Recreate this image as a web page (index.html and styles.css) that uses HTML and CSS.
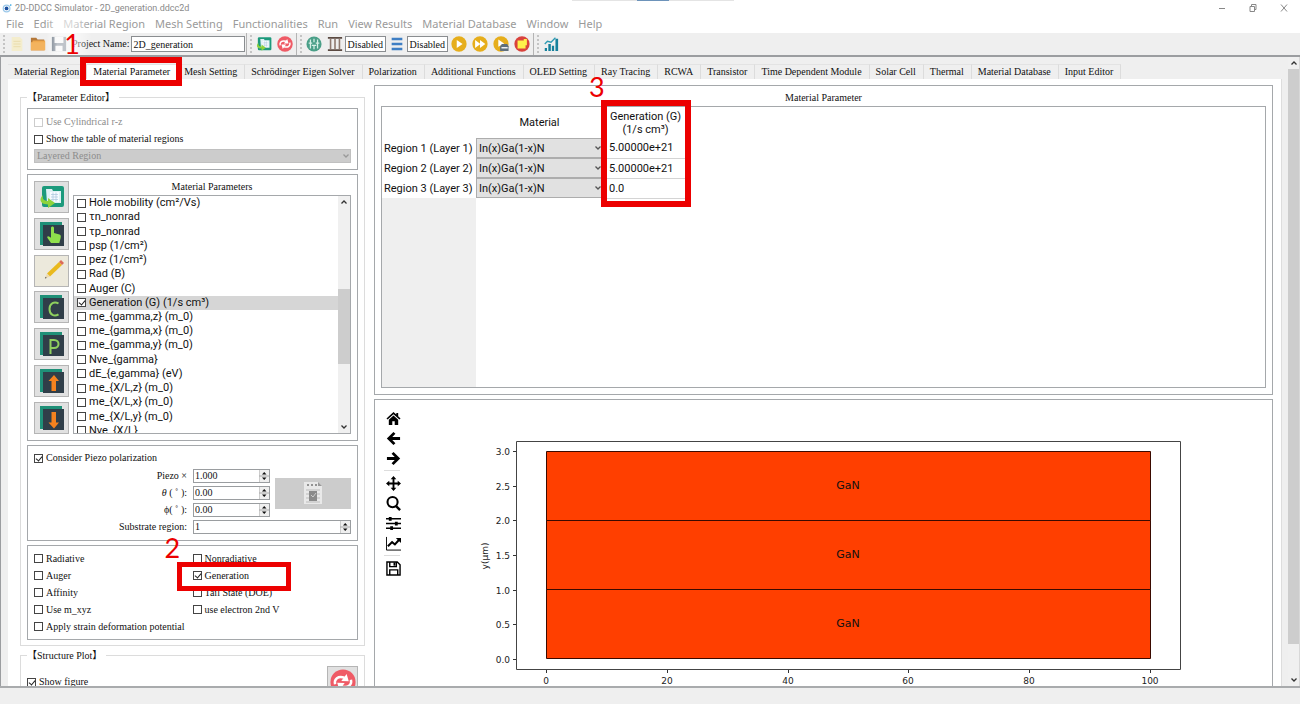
FILE: index.html
```html
<!DOCTYPE html>
<html lang="en">
<head>
<meta charset="utf-8">
<title>2D-DDCC Simulator - 2D_generation.ddcc2d</title>
<link rel="stylesheet" href="styles.css">
</head>
<body>
<svg class="defs" aria-hidden="true">
  <symbol id="chev-up" viewBox="0 0 8 8"><path d="M1.5 5.5 4 3l2.500 2.500" fill="none" stroke="#333" stroke-width="1.300"/></symbol>
  <symbol id="chev-down" viewBox="0 0 8 8"><path d="M1.500 2.500 4 5l2.500-2.500" fill="none" stroke="currentColor" stroke-width="1.300"/></symbol>
  <symbol id="spin" viewBox="0 0 10 12"><path d="M0 0h10v12H0z" fill="#efefef"/><path d="M0 0v12M0 6h10" stroke="#aaa" fill="none"/><path d="M3 4.500 5.200 2l2.300 2.500zM3 7.500 5.200 10l2.300-2.500z" fill="#111"/></symbol>
  <symbol id="refresh" viewBox="0 0 18 18"><circle cx="9" cy="9" r="8.700" fill="#ef5b66"/><path d="M3.500 10.500c-.8-3.500 2-6 6.500-4.500M14.500 7.500c.8 3.500-2 6-6.500 4.500" fill="none" stroke="#fff" stroke-width="1.700"/><path d="M7.800 8.300 13 8.500l-1.500-5zM10.200 9.700 5 9.500l1.500 5z" fill="#fff"/></symbol>
  <symbol id="layers" viewBox="0 0 26 26"><path d="M1 1h22v23H1z" fill="#1f9078"/><path d="M4 4h21v21H4z" fill="#303e49"/></symbol>
  <symbol id="sheet" viewBox="0 0 26 26"><rect x="3" y="2" width="22" height="21" rx="2" fill="#1d9a7c"/><path d="M7 5h6l1 2h8v12H8z" fill="#dff1f5"/><path d="M11 8h9v10h-9z" fill="#f6fbff"/><path d="M12 10.500h7M12 13h7M12 15.500h7M14 8.500v9M17 8.500v9" stroke="#a9c6dd" stroke-width=".7"/><path d="M4 11c-5 5-2 9.500 5 9.500V24l7-5-7-5v3c-4 0-6-2-5-6z" fill="#8ed33c"/></symbol>
</svg>

<header class="titlebar">
  <svg class="logo" viewBox="0 0 12 12"><circle cx="5.500" cy="6.500" r="4" fill="none" stroke="#9cc9ea" stroke-width="1.500"/><circle cx="5.500" cy="6.500" r="2.300" fill="#1b4f9f"/><circle cx="10.500" cy="2.500" r="1" fill="#2fa3e0"/></svg>
  <span class="title">2D-DDCC Simulator - 2D_generation.ddcc2d</span>
  <button class="win" aria-label="Minimize"><svg viewBox="0 0 8 8"><path d="M1 4.500h6"/></svg></button>
  <button class="win" aria-label="Restore"><svg viewBox="0 0 8 8"><path d="M1 2.500h4.500v5H1zM2.500 2.500v-2H7v5H5.500"/></svg></button>
  <button class="win" aria-label="Close"><svg viewBox="0 0 8 8"><path d="m1 .5 6 7M7 .5l-6 7"/></svg></button>
  <span class="snap"></span>
</header>

<nav class="menubar">
  <a href="#">File</a><a href="#">Edit</a><a href="#">Material Region</a><a href="#">Mesh Setting</a><a href="#">Functionalities</a><a href="#">Run</a><a href="#">View Results</a><a href="#">Material Database</a><a href="#">Window</a><a href="#">Help</a>
  <span class="glow"></span>
</nav>

<div class="toolbar">
  <span class="grip"></span>
  <button class="tool dim" aria-label="New"><svg viewBox="0 0 18 18"><path d="M3 1h9l3 3v13H3z" fill="#f7edbf"/><path d="M5 6h8M5 9h8M5 12h8" stroke="#e6d38d"/></svg></button>
  <button class="tool" aria-label="Open"><svg viewBox="0 0 18 18"><path d="M1 2h6l1.500 2H16v12H1z" fill="#b5793a"/><path d="M3 5h14v11H1z" fill="#f0a94d"/><path d="M1 7h16v9H1z" fill="#f3b35e"/></svg></button>
  <button class="tool" aria-label="Save"><svg viewBox="0 0 18 18"><path d="M1 1h16v16H1z" fill="#5f6b7a"/><path d="M4 1h10v7H4zM5 11h8v6H5z" fill="#f4f4f4"/></svg></button>
  <label class="project" for="project">Project Name:</label>
  <input class="field project-name" id="project" type="text" value="2D_generation">
  <span class="sep"></span><span class="grip"></span>
  <button class="tool" aria-label="Import"><svg viewBox="0 0 26 26"><use href="#sheet"/></svg></button>
  <button class="tool" aria-label="Reload"><svg viewBox="0 0 18 18"><use href="#refresh"/></svg></button>
  <span class="sep"></span><span class="grip"></span>
  <button class="tool" aria-label="Mesh"><svg viewBox="0 0 18 18"><circle cx="9" cy="9" r="8.500" fill="#4a9f88"/><path d="M5 4v10M9 3v4M9 11v4M13 4v10M3 8h4M11 8h4M6.500 10.500h5" stroke="#d6efe6" stroke-width="1.400"/></svg></button>
  <button class="tool" aria-label="Columns"><svg viewBox="0 0 18 18"><path d="M1 2h16M1 16h16" stroke="#5b4a42" stroke-width="2"/><path d="M4 3v12M9 3v12M14 3v12" stroke="#8f7a70" stroke-width="1.800"/></svg></button>
  <input class="field state" type="text" value="Disabled" aria-label="Column state">
  <button class="tool" aria-label="Rows"><svg viewBox="0 0 18 18"><path d="M3 3.500h12M3 9h12M3 14.500h12" stroke="#3f7fc4" stroke-width="2.800"/></svg></button>
  <input class="field state" type="text" value="Disabled" aria-label="Row state">
  <button class="tool" aria-label="Run"><svg viewBox="0 0 18 18"><circle cx="9" cy="9" r="8.600" fill="#e6ae1c"/><path d="m6.500 4.500 6.500 4.500-6.500 4.500z" fill="#fff"/></svg></button>
  <button class="tool" aria-label="Run all"><svg viewBox="0 0 18 18"><circle cx="9" cy="9" r="8.600" fill="#e6ae1c"/><path d="m3.500 4.500 6 4.500-6 4.500zM9 4.500l6 4.500-6 4.500z" fill="#fff"/></svg></button>
  <button class="tool" aria-label="Run and save"><svg viewBox="0 0 18 18"><circle cx="9" cy="9" r="8.600" fill="#e6ae1c"/><path d="m6 4 6.500 4.500L6 12z" fill="#fff"/><path d="M8 11.500 10 9h6l1.500 2.500v5.500H8z" fill="#5f6f7c"/><path d="M9.500 12.500h7v1.500h-7z" fill="#fff"/></svg></button>
  <button class="tool" aria-label="Stop"><svg viewBox="0 0 18 18"><circle cx="9" cy="9" r="8.600" fill="#d9423c"/><path d="M4 5h7V3.500h3.500v7H13V14H4z" fill="#fff04a"/></svg></button>
  <span class="sep"></span><span class="grip"></span>
  <button class="tool" aria-label="Plot"><svg viewBox="0 0 18 18"><path d="M2 13.500h2.500V17H2zM6 9h2.800v8H6zM10 11h2.500v6H10zM14 3h3v14h-3z" fill="#16819c"/><path d="m2 9 3-3 4 1 5-5" fill="none" stroke="#2c9ab3" stroke-width="1.500"/></svg></button>
</div>

<main class="workspace">
  <div class="content">
    <div class="tabs" role="tablist">
      <button role="tab">Material Region</button><span class="tab-wrap"><button role="tab" class="active" aria-selected="true">Material Parameter</button><span class="mark mark-tab"><b>1</b></span></span><button role="tab">Mesh Setting</button><button role="tab">Schrödinger Eigen Solver</button><button role="tab">Polarization</button><button role="tab">Additional Functions</button><button role="tab">OLED Setting</button><button role="tab">Ray Tracing</button><button role="tab">RCWA</button><button role="tab">Transistor</button><button role="tab">Time Dependent Module</button><button role="tab">Solar Cell</button><button role="tab">Thermal</button><button role="tab">Material Database</button><button role="tab">Input Editor</button>
    </div>
    <div class="pane">
      <div class="side">
        <fieldset class="group">
          <legend>【Parameter Editor】</legend>
          <section class="panel options">
            <label class="check off"><input type="checkbox" disabled>Use Cylindrical r-z</label>
            <label class="check"><input type="checkbox">Show the table of material regions</label>
            <div class="combo off"><select disabled aria-label="Region type"><option>Layered Region</option></select><svg><use href="#chev-down"/></svg></div>
          </section>
          <section class="panel params">
            <div class="actions">
              <button aria-label="Load table"><svg viewBox="0 0 26 26"><use href="#sheet"/></svg></button>
              <button aria-label="Pick"><svg viewBox="0 0 26 26"><use href="#layers"/><path d="M12 7c0-2 3-2 3 0v5l5.500 1.500c1.500.5 1.500 2 1 4l-1.200 4.500H12l-3.500-5c-1-1.800.8-2.500 2-1.200l1.500 1z" fill="#8fe04c"/></svg></button>
              <button class="cream" aria-label="Edit"><svg viewBox="0 0 26 26"><path d="M8 15.500 20 4l3 3L11 18.500z" fill="#e9b91e"/><path d="m20 4 2-2 3 3-2 2z" fill="#db6b59"/><path d="m8 15.500-2 5 5-2z" fill="#ecd9ae"/><path d="m6.700 18.800-.8 1.800 1.800-.7z" fill="#444"/></svg></button>
              <button aria-label="C"><svg viewBox="0 0 26 26"><use href="#layers"/><path d="M19.500 9.500c-4-2.500-9-.5-9 5.500s5 8 9 5.300" fill="none" stroke="#8fd05e" stroke-width="2"/></svg></button>
              <button aria-label="P"><svg viewBox="0 0 26 26"><use href="#layers"/><path d="M11.500 23V9h3.500c6 0 6 8 0 8h-3.500" fill="none" stroke="#8fd05e" stroke-width="2"/></svg></button>
              <button aria-label="Move up"><svg viewBox="0 0 26 26"><use href="#layers"/><path d="m15 7 5 6h-3v10h-4.500V13h-3z" fill="#f5821f"/></svg></button>
              <button aria-label="Move down"><svg viewBox="0 0 26 26"><use href="#layers"/><path d="m15 23.500 5-6h-3V7h-4.500v10.500h-3z" fill="#f5821f"/></svg></button>
            </div>
            <div class="param-main">
              <h2>Material Parameters</h2>
              <div class="listbox">
                <ul>
                  <li><label class="check"><input type="checkbox">Hole mobility (cm²/Vs)</label></li>
                  <li><label class="check"><input type="checkbox">τn_nonrad</label></li>
                  <li><label class="check"><input type="checkbox">τp_nonrad</label></li>
                  <li><label class="check"><input type="checkbox">psp (1/cm²)</label></li>
                  <li><label class="check"><input type="checkbox">pez (1/cm²)</label></li>
                  <li><label class="check"><input type="checkbox">Rad (B)</label></li>
                  <li><label class="check"><input type="checkbox">Auger (C)</label></li>
                  <li class="selected"><label class="check"><input type="checkbox" checked>Generation (G) (1/s cm³)</label></li>
                  <li><label class="check"><input type="checkbox">me_{gamma,z} (m_0)</label></li>
                  <li><label class="check"><input type="checkbox">me_{gamma,x} (m_0)</label></li>
                  <li><label class="check"><input type="checkbox">me_{gamma,y} (m_0)</label></li>
                  <li><label class="check"><input type="checkbox">Nve_{gamma}</label></li>
                  <li><label class="check"><input type="checkbox">dE_{e,gamma} (eV)</label></li>
                  <li><label class="check"><input type="checkbox">me_{X/L,z} (m_0)</label></li>
                  <li><label class="check"><input type="checkbox">me_{X/L,x} (m_0)</label></li>
                  <li><label class="check"><input type="checkbox">me_{X/L,y} (m_0)</label></li>
                  <li><label class="check"><input type="checkbox">Nve_{X/L}</label></li>
                </ul>
                <div class="scroll list-scroll"><svg><use href="#chev-up"/></svg><div class="track"><span></span></div><svg><use href="#chev-down"/></svg></div>
              </div>
            </div>
          </section>
          <section class="panel piezo">
            <label class="check"><input type="checkbox" checked>Consider Piezo polarization</label>
            <div class="piezo-grid">
              <label for="px">Piezo ×</label>
              <div class="spin"><input id="px" type="text" value="1.000"><svg><use href="#spin"/></svg></div>
              <button class="calc" disabled aria-label="Calculate"><svg viewBox="0 0 22 26"><path d="M2 2h14l4 4v18H2z" fill="#e9e9e9"/><path d="M16 2v4h4z" fill="#999"/><path d="M5 5h2M9 5h2M13 5h2" stroke="#777" stroke-width="1.500"/><path d="M4 10h14M4 14h14M4 18h14M4 22h14" stroke="#bbb"/><path d="M7 11h8v10H7z" fill="#8a8a8a"/><path d="m9 15 2 2 3-4" stroke="#ccc" fill="none"/></svg></button>
              <label for="th"><i>θ</i> ( ˚ ):</label>
              <div class="spin"><input id="th" type="text" value="0.00"><svg><use href="#spin"/></svg></div>
              <label for="ph">ϕ( ˚ ):</label>
              <div class="spin"><input id="ph" type="text" value="0.00"><svg><use href="#spin"/></svg></div>
              <label for="sub">Substrate region:</label>
              <div class="spin wide"><input id="sub" type="text" value="1"><svg><use href="#spin"/></svg></div>
            </div>
          </section>
          <section class="panel models">
            <label class="check"><input type="checkbox">Radiative</label>
            <label class="check"><input type="checkbox">Nonradiative</label>
            <label class="check"><input type="checkbox">Auger</label>
            <label class="check marked"><input type="checkbox" checked>Generation<span class="mark mark-model"><b>2</b></span></label>
            <label class="check"><input type="checkbox">Affinity</label>
            <label class="check"><input type="checkbox">Tail State (DOE)</label>
            <label class="check"><input type="checkbox">Use m_xyz</label>
            <label class="check"><input type="checkbox">use electron 2nd V</label>
            <label class="check full"><input type="checkbox">Apply strain deformation potential</label>
          </section>
        </fieldset>
        <fieldset class="group plot-group">
          <legend>【Structure Plot】</legend>
          <div class="plot-row">
            <label class="check"><input type="checkbox" checked>Show figure</label>
            <button aria-label="Refresh figure"><svg viewBox="0 0 18 18"><use href="#refresh"/></svg></button>
          </div>
        </fieldset>
      </div>

      <div class="views">
        <section class="panel table-panel">
          <h2>Material Parameter</h2>
          <div class="sheet">
            <table>
              <thead><tr><th></th><th class="material">Material</th><th class="gen">Generation (G)<br>(1/s cm³)<span class="mark mark-gen"><b>3</b></span></th></tr></thead>
              <tbody>
                <tr><th>Region 1 (Layer 1)</th><td><div class="combo"><select aria-label="Region 1 material"><option>In(x)Ga(1-x)N</option></select><svg><use href="#chev-down"/></svg></div></td><td class="value">5.00000e+21</td></tr>
                <tr><th>Region 2 (Layer 2)</th><td><div class="combo"><select aria-label="Region 2 material"><option>In(x)Ga(1-x)N</option></select><svg><use href="#chev-down"/></svg></div></td><td class="value">5.00000e+21</td></tr>
                <tr><th>Region 3 (Layer 3)</th><td><div class="combo"><select aria-label="Region 3 material"><option>In(x)Ga(1-x)N</option></select><svg><use href="#chev-down"/></svg></div></td><td class="value">0.0</td></tr>
              </tbody>
            </table>
          </div>
        </section>
        <section class="panel figure-panel">
          <div class="figure-tools">
            <button aria-label="Home"><svg viewBox="0 0 16 16"><path d="M8 1 .5 8l1.200 1L8 3.500 14.300 9l1.200-1L13 5.500V2h-2v1.800zM8 4.800 3 9.200V15h3.700v-4h2.600v4H13V9.200z"/></svg></button>
            <button aria-label="Back"><svg viewBox="0 0 16 16"><path d="M9 2 3 8l6 6M3 8h12" fill="none" stroke="#000" stroke-width="3"/></svg></button>
            <button aria-label="Forward"><svg viewBox="0 0 16 16"><path d="m7 2 6 6-6 6M13 8H1" fill="none" stroke="#000" stroke-width="3"/></svg></button>
            <hr>
            <button aria-label="Pan"><svg viewBox="0 0 16 16"><path d="M8 2v12M2 8h12" stroke="#000" stroke-width="2"/><path d="m8 0 3 3.500H5zM8 16l3-3.500H5zM0 8l3.500-3v6zM16 8l-3.500-3v6z"/></svg></button>
            <button aria-label="Zoom"><svg viewBox="0 0 16 16"><circle cx="7" cy="6.500" r="5.400" fill="none" stroke="#000" stroke-width="2.200"/><path d="m10.500 10.500 4.500 4.500" stroke="#000" stroke-width="2.600"/></svg></button>
            <button aria-label="Configure subplots"><svg viewBox="0 0 16 16"><path d="M0 3h16M0 8h16M0 13h16" stroke="#000" stroke-width="1.500"/><path d="M3 1h3v4H3zM9.500 6h3v4h-3zM4.500 11h3v4h-3z"/></svg></button>
            <button aria-label="Edit axes"><svg viewBox="0 0 16 16"><path d="M.5 1v14H16" fill="none" stroke="#000"/><path d="m2 11 4.500-4.500 3 2.500L14 4" fill="none" stroke="#000" stroke-width="2.200"/><path d="M10.500 2H16v5.500z"/></svg></button>
            <hr>
            <button aria-label="Save figure"><svg viewBox="0 0 16 16"><path d="M1 1h11l3 3v11H1zM4 1v5h7V1M4 15V9.500h8.500V15" fill="none" stroke="#000" stroke-width="1.500"/><path d="M8 1.500h2V5H8z"/></svg></button>
          </div>
          <svg class="chart" viewBox="410 400 862 300" role="img" aria-label="Layer structure">
            <g fill="#ff3f00" stroke="#3a0a00"><path d="M546.500 451.500h604v69h-604zM546.500 520.500h604v69h-604zM546.500 589.500h604v69h-604z"/></g>
            <path d="M516.500 441.500h664v228h-664z" fill="none" stroke="#444"/>
            <path d="M513 451.500h3M513 486.500h3M513 520.500h3M513 555.500h3M513 590.500h3M513 624.500h3M513 659.500h3M546.500 670v3M667.500 670v3M788.500 670v3M908.500 670v3M1029.500 670v3M1150.500 670v3" stroke="#333"/>
            <g class="tick" text-anchor="end"><text x="510" y="455">3.0</text><text x="510" y="490">2.5</text><text x="510" y="524">2.0</text><text x="510" y="559">1.5</text><text x="510" y="594">1.0</text><text x="510" y="628">0.5</text><text x="510" y="663">0.0</text></g>
            <g class="tick" text-anchor="middle"><text x="546" y="684">0</text><text x="667" y="684">20</text><text x="788" y="684">40</text><text x="908" y="684">60</text><text x="1029" y="684">80</text><text x="1150" y="684">100</text><text transform="translate(488 556) rotate(-90)">y(μm)</text></g>
            <g class="layer" text-anchor="middle"><text x="848" y="489">GaN</text><text x="848" y="558">GaN</text><text x="848" y="627">GaN</text></g>
          </svg>
        </section>
      </div>
    </div>
  </div>
  <div class="scroll page-scroll"><svg><use href="#chev-up"/></svg><div class="track"><span></span></div><svg><use href="#chev-down"/></svg></div>
</main>
<footer class="status"></footer>
</body>
</html>
```

FILE: styles.css
```css
* { box-sizing: border-box; }
:root {
  --serif: "Liberation Serif", "Noto Sans CJK TC", serif;
  --sans: Roboto, "Noto Sans", sans-serif;
  --line: #a5a8ab;
  --red: #ec0000;
}
body {
  margin: 0;
  height: 100vh;
  display: flex;
  flex-direction: column;
  overflow: hidden;
  background: #fff;
  color: #111;
  font: 10px/12px var(--serif);
}
button, input, select { font: inherit; color: inherit; margin: 0; padding: 0; border: 0; background: none; border-radius: 0; }
button { display: flex; align-items: center; justify-content: center; }
h2 { margin: 0; font: inherit; text-align: center; }
.defs { position: absolute; width: 0; height: 0; }

.titlebar { position: relative; display: flex; align-items: center; height: 15px; padding: 0 11px 0 2px; font: 9px/14px var(--sans); color: #8a8a8a; flex: none; }
.logo { width: 10px; height: 10px; }
.title { flex: 1; padding-left: 3px; }
.win { width: 10px; height: 14px; margin-left: 21px; }
.win svg { width: 8px; height: 8px; fill: none; stroke: #888; }
.snap { position: absolute; left: 44%; top: 0; width: 162px; height: 1px; background: linear-gradient(90deg, #e4e4e4 40%, #6d93ba 40% 60%, #e4e4e4 60%); }

.menubar { position: relative; display: flex; gap: 10px; height: 18px; padding: 0 6px; font: 11px/18px "Noto Sans", "Open Sans", sans-serif; flex: none; }
.menubar a { color: #9a9a9a; text-decoration: none; white-space: nowrap; }
.glow { position: absolute; z-index: 1; left: 46px; top: 0; width: 46px; height: 40px; background: linear-gradient(90deg, transparent, rgba(255,255,255,.6) 25%, rgba(255,255,255,.6) 60%, transparent); }

.toolbar { display: flex; align-items: center; height: 24px; background: #efefef; border-bottom: 2px solid #9b9da0; flex: none; padding-left: 2px; }
.grip { width: 2px; height: 18px; margin: 0 1px; border-left: 2px dotted #c4c4c4; flex: none; }
.sep { width: 1px; height: 22px; margin: 0 2px 0 1px; background: #b4b4b4; flex: none; }
.tool { width: 21px; height: 20px; flex: none; }
.tool svg { width: 16px; height: 16px; }
.dim { opacity: .7; }
.project { padding: 0 2px 0 3px; }
.field { height: 16px; border: 1px solid #8a8d90; background: #fff; padding-left: 1px; }
.project-name { width: 114px; }
.state { width: 41px; }

.workspace { flex: 1; min-height: 0; display: flex; background: #efefef; border-left: 1px solid #9b9da0; }
.content { flex: 1; min-width: 0; padding: 7px 6px 0 7px; display: flex; flex-direction: column; }
.tabs { display: flex; height: 15px; flex: none; }
.tabs button { height: 15px; padding: 0 7px 0 6px; border-right: 1px solid #dcdcdc; border-top: 1px solid #e3e3e3; white-space: nowrap; }
.tabs .active { background: #fff; }
.tab-wrap { position: relative; }
.pane { flex: 1; min-height: 0; display: flex; gap: 9px; padding: 6px 8px 0 12px; background: #fff; border-right: 1px solid #ddd; }
.side { width: 345px; flex: none; padding-top: 6px; }
.views { flex: 1; min-width: 0; display: flex; flex-direction: column; gap: 4px; }

.group { margin: 0; min-width: 0; padding: 4px 6px 5px; border: 1px solid #dcdcdc; display: flow-root; }
.group legend { height: 13px; padding: 0 4px 0 0; line-height: 13px; }
.panel { border: 1px solid var(--line); }
.group .panel { padding: 6px; }
.group .panel + .panel { margin-top: 4px; }

.check { display: flex; align-items: center; gap: 3px; white-space: nowrap; }
.check input { appearance: none; width: 9px; height: 9px; flex: none; border: 1px solid #444; background: #fff; position: relative; }
.check input:checked::after { content: ""; position: absolute; left: 2px; top: 0; width: 3px; height: 5px; border: solid #222; border-width: 0 1px 1px 0; transform: rotate(40deg); }
.off { color: #8c8c8c; }
.check.off input { border-color: #ccc; }

.combo { position: relative; display: flex; }
.combo select { appearance: none; flex: 1; min-width: 0; padding-left: 2px; background: #e1e1e1; border: 1px solid #adadad; }
.combo svg { position: absolute; right: 1px; top: 50%; width: 8px; height: 8px; margin-top: -4px; color: #555; }
.combo.off select { height: 14px; background: #ccc; border-color: #c0c0c0; opacity: 1; }
.combo.off svg { color: #999; }
.options { height: 62px; display: flex; flex-direction: column; justify-content: space-between; }
.options .check { height: 14px; }

.params { display: flex; gap: 4px; }
.actions { width: 35px; display: flex; flex-direction: column; justify-content: space-between; }
.actions button, .plot-row button { height: 32px; background: #e1e1e1; border: 1px solid #b5b5b5; }
.actions svg { width: 26px; height: 26px; }
.actions .cream { background: #ece9dc; }
.param-main { flex: 1; min-width: 0; }
.param-main h2 { height: 14px; line-height: 12px; }
.listbox { display: flex; height: 239px; border: 1px solid var(--line); overflow: hidden; }
.listbox ul { flex: 1; height: 242px; margin: 0; padding: 0; list-style: none; display: grid; grid-template-rows: repeat(17, 1fr); font: 11px/14px var(--sans); }
.listbox li { display: flex; padding-left: 3px; }
.listbox .selected { background: #d6d6d6; }
.scroll { display: flex; flex-direction: column; align-items: center; width: 12px; background: #f0f0f0; flex: none; }
.scroll > svg { width: 8px; height: 12px; color: #333; }
.track { flex: 1; width: 100%; display: flex; flex-direction: column; }
.track span { width: 100%; background: #cdcdcd; }
.list-scroll .track span { margin-top: 81px; height: 75px; }
.page-scroll { border-right: 1px solid #d8d8d8; }
.page-scroll .track span { flex: 0 0 95%; }

.piezo-grid { display: grid; grid-template-columns: 1fr 77px 76px; grid-template-rows: repeat(4, 14px); gap: 3px 5px; padding-top: 5px; text-align: right; align-items: center; }
.spin { display: flex; height: 14px; border: 1px solid #9a9da0; background: #fff; }
.spin input { flex: 1; min-width: 0; padding-left: 1px; }
.spin svg { width: 10px; height: 12px; flex: none; }
.wide { grid-column: 2 / 4; }
.calc { grid-column: 3; grid-row: 1 / 4; height: 31px; background: #ccc; }
.calc svg { width: 22px; height: 26px; }
.piezo-grid label { grid-column: 1; padding-right: 1px; }

.models { display: grid; grid-template-columns: 1fr 1fr; grid-auto-rows: 17px; }
.group .models { padding: 4px 6px; }
.models .full { grid-column: 1 / 3; }
.marked { position: relative; }

.plot-group { margin-top: 3px; padding: 4px 6px; }
.plot-row { display: flex; justify-content: space-between; align-items: center; }
.plot-row .check { height: 20px; }
.plot-row button { width: 31px; }
.plot-row svg { width: 26px; height: 26px; }

.table-panel { padding: 5px 6px 6px; }
.table-panel h2 { height: 15px; line-height: 13px; }
.sheet { height: 282px; border: 1px solid var(--line); background: linear-gradient(#efefef, #efefef) 0 0 / 94px 100% no-repeat; font: 11px/13px var(--sans); }
.sheet table { border-collapse: collapse; table-layout: fixed; width: 306px; }
.sheet th, .sheet td { padding: 0; font-weight: normal; height: 20px; white-space: nowrap; }
.sheet th { background: #fff; }
.sheet th:first-child { width: 94px; }
.sheet tbody th { text-align: left; padding-left: 2px; }
.sheet thead th { height: 31px; }
.sheet .material { width: 127px; }
.sheet .gen { position: relative; }
.sheet select { height: 20px; }
.sheet .value { padding-left: 6px; border-bottom: 1px solid #d4d4d4; }
.figure-panel { display: flex; align-items: flex-start; flex: none; }
.figure-tools { width: 35px; padding: 8px 8px 0 9px; display: flex; flex-direction: column; }
.figure-tools button { height: 20px; }
.figure-tools svg { width: 15px; height: 15px; flex: none; }
.figure-tools hr { width: 16px; margin: 2px 0; border: 0; border-top: 1px solid #ddd; }
.chart { flex: 1; min-width: 0; }
.tick { font: 9px "DejaVu Sans", sans-serif; fill: #222; }
.layer { font: 11px "DejaVu Sans", sans-serif; fill: #111; }

.status { position: relative; z-index: 3; height: 18px; background: #efefef; border-top: 2px solid #a9abad; flex: none; }

.mark { position: absolute; z-index: 2; border: 6px solid var(--red); pointer-events: none; }
.mark b { position: absolute; font: 27px/27px Lato, sans-serif; color: var(--red); }
.mark-tab { left: -7px; right: -4px; top: -7px; height: 29px; }
.mark-tab b { left: -22px; top: -33px; }
.mark-model { left: -16px; top: -5px; width: 114px; height: 29px; border-width: 5px; }
.mark-model b { left: -17px; top: -33px; }
.mark-gen { left: -2px; top: -7px; width: 90px; height: 107px; }
.mark-gen b { left: -18px; top: -33px; }
```
